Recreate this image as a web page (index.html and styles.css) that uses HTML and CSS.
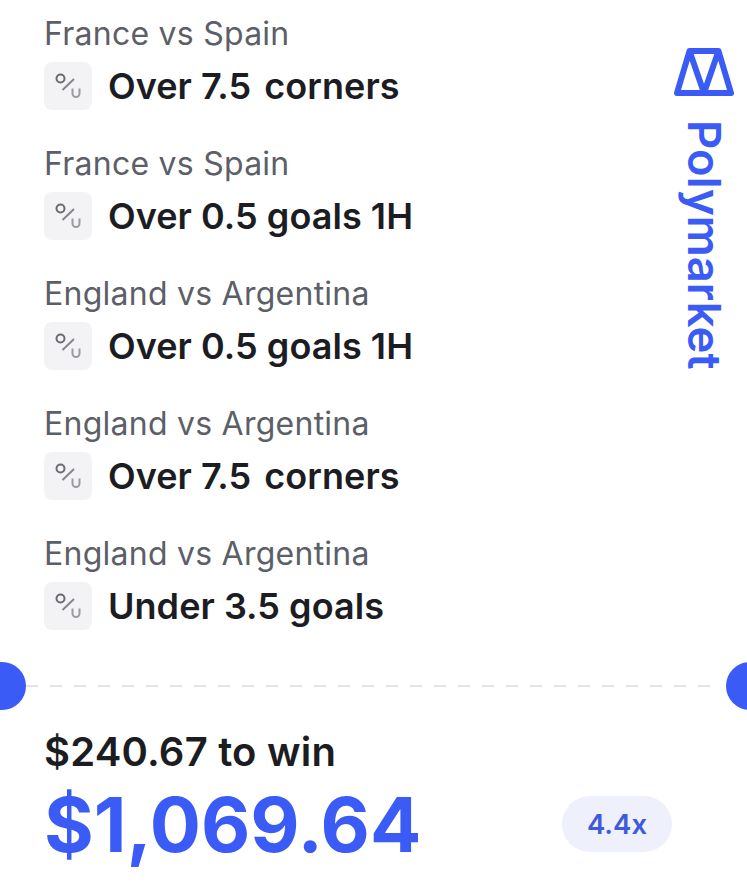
FILE: index.html
```html
<!DOCTYPE html>
<html>

<head>
	<title>Polymarket parlay</title>
	<link rel="stylesheet" href="styles.css">
</head>

<body>
	<div class="top">
		<div class="legs">
			<div class="leg">
				<p class="match">France vs Spain</p>
				<div class="pick">
					<span class="pick-icon"><svg width="48" height="48" viewBox="0 0 48 48"><circle class="ou-o" cx="16.5" cy="16.5" r="4" /><path class="ou-slash" d="M18.5 28 L30 17" /><path class="ou-u" d="M28.5 26.5 V31.5 A3.5 3.5 0 0 0 35.5 31.5 V26.5" /></svg></span>
					<span class="pick-text">Over 7.5 <span class="gap">corners</span></span>
				</div>
			</div>
			<div class="leg">
				<p class="match">France vs Spain</p>
				<div class="pick">
					<span class="pick-icon"><svg width="48" height="48" viewBox="0 0 48 48"><circle class="ou-o" cx="16.5" cy="16.5" r="4" /><path class="ou-slash" d="M18.5 28 L30 17" /><path class="ou-u" d="M28.5 26.5 V31.5 A3.5 3.5 0 0 0 35.5 31.5 V26.5" /></svg></span>
					<span class="pick-text">Over 0.5 goals 1H</span>
				</div>
			</div>
			<div class="leg">
				<p class="match">England vs Argentina</p>
				<div class="pick">
					<span class="pick-icon"><svg width="48" height="48" viewBox="0 0 48 48"><circle class="ou-o" cx="16.5" cy="16.5" r="4" /><path class="ou-slash" d="M18.5 28 L30 17" /><path class="ou-u" d="M28.5 26.5 V31.5 A3.5 3.5 0 0 0 35.5 31.5 V26.5" /></svg></span>
					<span class="pick-text">Over 0.5 goals 1H</span>
				</div>
			</div>
			<div class="leg">
				<p class="match">England vs Argentina</p>
				<div class="pick">
					<span class="pick-icon"><svg width="48" height="48" viewBox="0 0 48 48"><circle class="ou-o" cx="16.5" cy="16.5" r="4" /><path class="ou-slash" d="M18.5 28 L30 17" /><path class="ou-u" d="M28.5 26.5 V31.5 A3.5 3.5 0 0 0 35.5 31.5 V26.5" /></svg></span>
					<span class="pick-text">Over 7.5 <span class="gap">corners</span></span>
				</div>
			</div>
			<div class="leg">
				<p class="match">England vs Argentina</p>
				<div class="pick">
					<span class="pick-icon"><svg width="48" height="48" viewBox="0 0 48 48"><circle class="ou-o" cx="16.5" cy="16.5" r="4" /><path class="ou-slash" d="M18.5 28 L30 17" /><path class="ou-u" d="M28.5 26.5 V31.5 A3.5 3.5 0 0 0 35.5 31.5 V26.5" /></svg></span>
					<span class="pick-text">Under 3.5 goals</span>
				</div>
			</div>
		</div>
		<div class="brand">
			<svg class="brand-logo" width="60" height="48" viewBox="0 0 60 48"><path d="M15.5 3 H44.5 L57 45 H3 Z M15.5 3 L30 45 L44.5 3" /></svg>
			<span class="brand-name">Polymarket</span>
		</div>
	</div>

	<div class="divider">
		<span class="notch notch-left"></span>
		<span class="dashes"></span>
		<span class="notch notch-right"></span>
	</div>

	<div class="payout">
		<p class="stake">$240.67 to win</p>
		<div class="payout-row">
			<span class="amount">$1,069.64</span>
			<span class="multiplier">4.4x</span>
		</div>
	</div>
</body>

</html>
```

FILE: styles.css
```css
body {
	margin: 0;
	background: white;
	font-family: Inter, "Liberation Sans", sans-serif;
	color: #1c1d22;
	height: 885px;
	overflow: hidden;
}

p {
	margin: 0;
}

.top {
	display: flex;
	justify-content: space-between;
	padding: 14px 13px 0 44px;
}

.legs {
	display: flex;
	flex-direction: column;
	gap: 34px;
}

.match {
	font-size: 32px;
	letter-spacing: 0.25px;
	line-height: 40px;
	color: #5c5f68;
}

.pick {
	display: flex;
	align-items: center;
	gap: 16px;
	margin-top: 8px;
}

.pick-icon {
	width: 48px;
	height: 48px;
	border-radius: 8px;
	background: #f3f3f6;
	display: flex;
}

.pick-icon svg {
	fill: none;
	stroke-width: 2;
}

.ou-o {
	stroke: #6a6b72;
}

.ou-slash {
	stroke: #85868d;
}

.ou-u {
	stroke: #9a9ba2;
}

.pick-text {
	font-size: 36px;
	font-weight: 600;
	letter-spacing: 0.05px;
	line-height: 48px;
}

.gap {
	margin-left: 4px;
}

.brand {
	display: flex;
	flex-direction: column;
	align-items: center;
	padding-top: 34px;
	gap: 24px;
}

.brand-logo {
	fill: none;
	stroke: #3b5bf6;
	stroke-width: 6;
	stroke-linejoin: round;
}

.brand-name {
	writing-mode: vertical-rl;
	font-size: 45.5px;
	font-weight: 600;
	line-height: 44px;
	color: #3b5bf6;
}

.divider {
	position: relative;
	height: 48px;
	margin-top: 32px;
	display: flex;
	align-items: center;
	padding: 0 26px;
}

.dashes {
	flex: 1;
	height: 2px;
	background: repeating-linear-gradient(to right, #e4e4e6 0 12px, transparent 12px 24px);
}

.notch {
	position: absolute;
	top: 0;
	width: 48px;
	height: 48px;
	border-radius: 50%;
	background: #3b5bf6;
}

.notch-left {
	left: -22px;
}

.notch-right {
	right: -27px;
}

.payout {
	padding: 0 75px 0 44px;
	margin-top: 20px;
}

.stake {
	font-size: 40px;
	font-weight: 600;
	letter-spacing: 0.2px;
	line-height: 44px;
}

.payout-row {
	display: flex;
	justify-content: space-between;
	align-items: center;
	margin-top: 5px;
}

.amount {
	font-size: 76px;
	font-weight: 700;
	line-height: 90px;
	color: #3b5bf6;
}

.multiplier {
	width: 110px;
	height: 56px;
	border-radius: 28px;
	background: #eef1fb;
	color: #3f5bdc;
	font-size: 27.5px;
	font-weight: 600;
	display: flex;
	align-items: center;
	justify-content: center;
}
```
